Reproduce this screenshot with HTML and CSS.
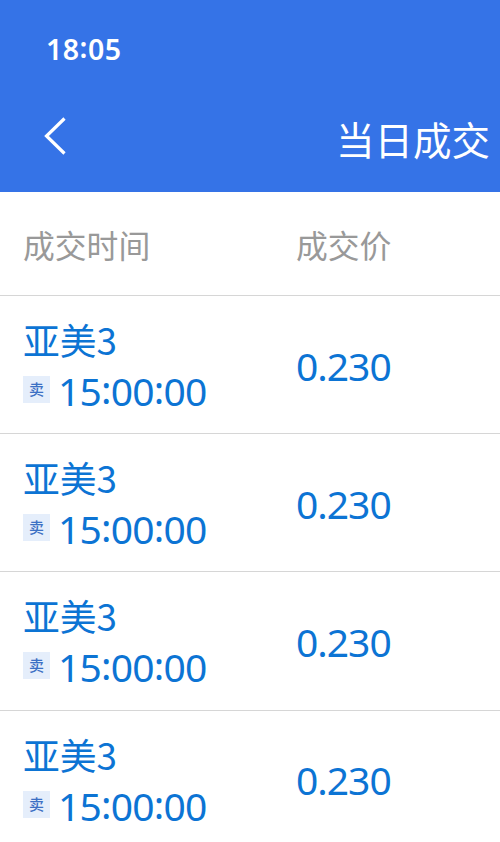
FILE: index.html
```html
<!DOCTYPE html>
<html lang="zh-CN">
<head>
    <meta charset="UTF-8">
    <meta name="viewport" content="width=device-width, initial-scale=1.0">
    <title>当日成交</title>
    <link rel="stylesheet" href="styles.css">
</head>
<body>

<header class="header">
    <div class="status-bar">18<i>:</i>05</div>
    <div class="nav">
        <svg class="back" width="24" height="40" viewBox="0 0 24 40">
            <path d="M20.5 2.5 L2.5 20 L20.5 37.5" fill="none" stroke="#fff" stroke-width="3.2"/>
        </svg>
        <h1>当日成交</h1>
    </div>
</header>

<div class="row table-head">
    <span>成交时间</span>
    <span>成交价</span>
</div>

<div class="row trade">
    <div>
        <div class="name">亚美3</div>
        <div class="time"><span class="tag">卖</span><span>15<i>:</i>00<i>:</i>00</span></div>
    </div>
    <div class="price">0.230</div>
</div>
<div class="row trade">
    <div>
        <div class="name">亚美3</div>
        <div class="time"><span class="tag">卖</span><span>15<i>:</i>00<i>:</i>00</span></div>
    </div>
    <div class="price">0.230</div>
</div>
<div class="row trade">
    <div>
        <div class="name">亚美3</div>
        <div class="time"><span class="tag">卖</span><span>15<i>:</i>00<i>:</i>00</span></div>
    </div>
    <div class="price">0.230</div>
</div>
<div class="row trade">
    <div>
        <div class="name">亚美3</div>
        <div class="time"><span class="tag">卖</span><span>15<i>:</i>00<i>:</i>00</span></div>
    </div>
    <div class="price">0.230</div>
</div>

</body>
</html>
```
FILE: styles.css
```css
body {
    font-family: "Noto Sans", "Noto Sans CJK SC", sans-serif;
    background-color: #fff;
    margin: 0;
    height: 842px;
    overflow: hidden;
}
/* raised colon in times */
i {
    font-style: normal;
    line-height: 0;
    vertical-align: 0.06em;
}
.header {
    box-sizing: border-box;
    height: 192px;
    background-color: #3573e7;
    color: #fff;
}
.status-bar {
    padding: 32px 0 0 46px;
    font-size: 28.5px;
    line-height: 34px;
    font-weight: 600;
    letter-spacing: 0.5px;
}
.nav {
    display: flex;
    justify-content: space-between;
    padding: 50px 10px 0 44px;
}
.nav h1 {
    margin: 0;
    font-size: 38.5px;
    line-height: 48px;
    font-weight: 400;
}
.row {
    box-sizing: border-box;
    display: grid;
    grid-template-columns: 273px 1fr;
    align-items: center;
    padding-left: 23px;
    border-bottom: 1px solid #d6d6d6;
}
.table-head {
    height: 104px;
    font-size: 31.8px;
    color: #999;
}
.trade {
    height: 138.2px;
    color: #0c74d4;
}
.name {
    font-family: "Noto Sans CJK SC", sans-serif;
    font-size: 36.8px;
    line-height: 48px;
    padding-top: 2px;
}
.time {
    display: flex;
    align-items: center;
    padding-top: 3px;
    font-size: 39px;
    line-height: 50px;
    letter-spacing: -0.8px;
}
.tag {
    width: 27px;
    height: 27px;
    margin: -3px 8px 0 0;
    background-color: #e5eefb;
    color: #3c70c4;
    font-size: 15px;
    line-height: 27px;
    font-weight: 500;
    letter-spacing: 0;
    text-align: center;
}
.price {
    padding-top: 1px;
    font-size: 39px;
    letter-spacing: -1px;
}
```
